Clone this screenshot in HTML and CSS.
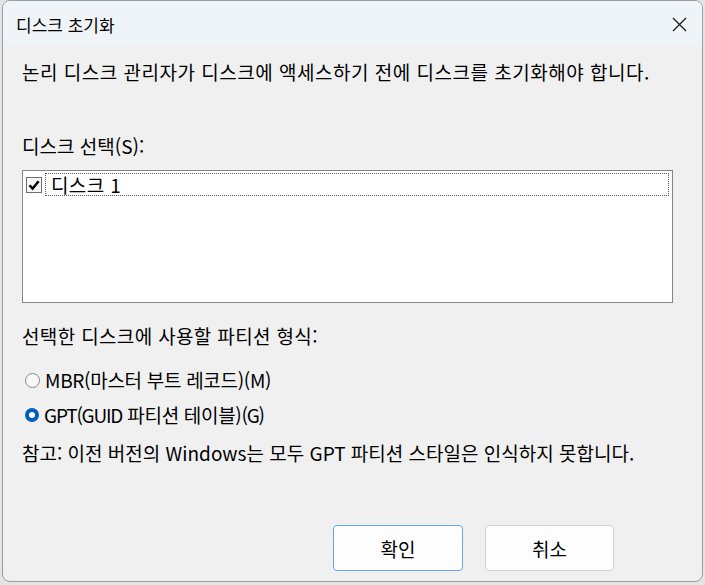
FILE: index.html
```html
<!DOCTYPE html>
<html lang="ko">
<head>
<meta charset="utf-8">
<title>디스크 초기화</title>
<link rel="stylesheet" href="styles.css">
</head>
<body>
<div class="window">
  <div class="titlebar">
    <span class="title">디스크 초기화</span>
    <span class="close" aria-label="닫기">
      <svg width="15" height="15" viewBox="0 0 15 15"><path d="M1 1 L14 14 M14 1 L1 14" stroke="#1b1b1b" stroke-width="1.3" fill="none"/></svg>
    </span>
  </div>
  <div class="content">
    <p class="line intro">논리 디스크 관리자가 디스크에 액세스하기 전에 디스크를 초기화해야 합니다.</p>
    <p class="line label">디스크 선택(S):</p>
    <div class="listbox">
      <div class="item">
        <span class="checkbox">
          <svg width="12" height="12" viewBox="0 0 12 12"><path d="M1.5 6.2 L4.6 9.6 L10.6 2.2" stroke="#000" stroke-width="2.4" fill="none"/></svg>
        </span>
        <span class="item-text">디스크 1</span>
      </div>
    </div>
    <p class="line part-label">선택한 디스크에 사용할 파티션 형식:</p>
    <div class="radio-row mbr"><span class="radio"></span><span>MBR(마스터 부트 레코드)(M)</span></div>
    <div class="radio-row gpt"><span class="radio checked"></span><span><span class="latin">GPT(GUID</span> 파티션 테이블)<span class="latin">(G)</span></span></div>
    <p class="line note">참고: 이전 버전의 Windows는 모두 GPT 파티션 스타일은 인식하지 못합니다.</p>
    <div class="buttons">
      <button class="btn default">확인</button>
      <button class="btn">취소</button>
    </div>
  </div>
</div>
</body>
</html>
```

FILE: styles.css
```css
html, body {
  margin: 0;
  padding: 0;
}
body {
  width: 705px;
  height: 585px;
  background: #e4e4e4;
  font-family: "Noto Sans CJK KR", "Noto Sans", sans-serif;
  font-size: 19px;
  letter-spacing: 0.35px;
  color: #000;
  overflow: hidden;
}
.window {
  margin-left: 2px;
  width: 699px;
  height: 580px;
  border: 1px solid #9c9c9c;
  border-radius: 8px;
  background: #f0f0f0;
  overflow: hidden;
  display: flex;
  flex-direction: column;
}
.titlebar {
  height: 45px;
  flex: none;
  background: #eff4f9;
  display: flex;
  align-items: center;
  justify-content: space-between;
  padding: 0 15px 0 13px;
}
.title {
  font-size: 17px;
  letter-spacing: 0;
  line-height: 24px;
  margin-top: 2px;
}
.close {
  display: flex;
  margin-top: 1px;
}
.content {
  padding-left: 19px;
  display: flex;
  flex-direction: column;
  flex: 1;
}
.line {
  margin: 0;
  line-height: 24px;
  white-space: nowrap;
}
.intro { margin-top: 14px; letter-spacing: 0.5px; }
.label { margin-top: 50px; letter-spacing: 0; }
.listbox {
  margin-top: 12px;
  width: 649px;
  height: 131px;
  border: 1px solid #858585;
  background: #fff;
  box-sizing: content-box;
}
.item {
  display: flex;
  align-items: center;
  margin-top: 2px;
  margin-left: 3px;
}
.checkbox {
  width: 14px;
  height: 14px;
  border: 1px solid #6e6e6e;
  background: #f7f7f7;
  display: flex;
  align-items: center;
  justify-content: center;
  flex: none;
}
.item-text {
  margin-left: 3px;
  width: 617px;
  height: 21px;
  border: 1px dotted #555;
  line-height: 21px;
  padding-left: 5px;
}
.part-label { margin-top: 21px; }
.radio-row {
  display: flex;
  align-items: center;
  line-height: 24px;
  white-space: nowrap;
  padding-left: 3px;
  letter-spacing: -0.3px;
}
.latin { letter-spacing: -1.2px; }
.mbr { margin-top: 20px; }
.gpt { margin-top: 11px; }
.radio {
  width: 13px;
  height: 13px;
  border: 1px solid #8a8a8a;
  border-radius: 50%;
  background: #f7f7f7;
  margin-right: 5px;
  flex: none;
  box-sizing: content-box;
}
.radio.checked {
  width: 6px;
  height: 6px;
  border: 4px solid #005fb8;
  background: #fff;
}
.note { margin-top: 14px; letter-spacing: 0; }
.buttons {
  margin-top: 60px;
  display: flex;
  justify-content: flex-end;
  gap: 22px;
  padding-right: 88px;
}
.btn {
  font-family: "Noto Sans CJK KR", "Noto Sans", sans-serif;
  font-size: 19px;
  width: 129px;
  height: 46px;
  border: 1px solid #d2d2d2;
  border-radius: 4px;
  background: #fdfdfd;
  color: #000;
  padding: 0;
}
.btn.default {
  width: 130px;
  border-color: #66a7e6;
}
```
